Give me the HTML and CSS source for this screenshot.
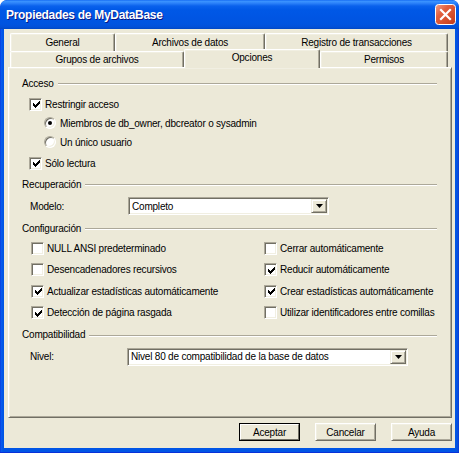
FILE: index.html
```html
<!DOCTYPE html>
<html lang="es">
<head>
<meta charset="utf-8">
<title>Propiedades de MyDataBase</title>
<link rel="stylesheet" href="styles.css">
</head>
<body>
<div class="window">
  <div class="titlebar">
    <span class="title">Propiedades de MyDataBase</span>
    <span class="close">
      <svg width="21" height="21" viewBox="0 0 21 21">
        <defs>
          <linearGradient id="cg" x1="0" y1="0" x2="1" y2="1">
            <stop offset="0" stop-color="#F2A08A"/>
            <stop offset="0.35" stop-color="#E2603F"/>
            <stop offset="1" stop-color="#C43A17"/>
          </linearGradient>
        </defs>
        <rect x="0.5" y="0.5" width="20" height="20" rx="3" fill="url(#cg)" stroke="#fff"/>
        <path d="M6 6 L15 15 M15 6 L6 15" stroke="#fff" stroke-width="2.2" stroke-linecap="square"/>
      </svg>
    </span>
  </div>
  <div class="client">
    <div class="tabrow">
      <div class="tab t-general">General</div>
      <div class="tab t-archivos">Archivos de datos</div>
      <div class="tab t-registro">Registro de transacciones</div>
    </div>
    <div class="tabrow front">
      <div class="tab t-grupos">Grupos de archivos</div>
      <div class="tab t-opciones active">Opciones</div>
      <div class="tab t-permisos">Permisos</div>
    </div>
    <div class="panel">
      <div class="group">Acceso</div>
      <div class="check lvl1 mt5"><span class="cb on"><svg width="7" height="7" viewBox="0 0 7 7"><path d="M0 2h1v3H0zM1 3h1v3H1zM2 4h1v3H2zM3 3h1v3H3zM4 2h1v3H4zM5 1h1v3H5zM6 0h1v3H6z" fill="#000"/></svg></span><span>Restringir acceso</span></div>
      <div class="radio lvl2 mt3"><span class="rb on"></span><span>Miembros de db_owner, dbcreator o sysadmin</span></div>
      <div class="radio lvl2 mt3"><span class="rb"></span><span>Un único usuario</span></div>
      <div class="check lvl1 mt5"><span class="cb on"><svg width="7" height="7" viewBox="0 0 7 7"><path d="M0 2h1v3H0zM1 3h1v3H1zM2 4h1v3H2zM3 3h1v3H3zM4 2h1v3H4zM5 1h1v3H5zM6 0h1v3H6z" fill="#000"/></svg></span><span>Sólo lectura</span></div>

      <div class="group mt5">Recuperación</div>
      <div class="field mt5">
        <span class="flabel">Modelo:</span>
        <div class="combo c-modelo"><span class="value">Completo</span><span class="drop"><svg width="7" height="4" viewBox="0 0 7 4"><path d="M0 0h7L3.5 4z" fill="#000"/></svg></span></div>
      </div>

      <div class="group mt5">Configuración</div>
      <div class="grid mt4">
        <div class="check gcol"><span class="cb"></span><span>NULL ANSI predeterminado</span></div>
        <div class="check gcol"><span class="cb"></span><span>Cerrar automáticamente</span></div>
        <div class="check gcol"><span class="cb"></span><span>Desencadenadores recursivos</span></div>
        <div class="check gcol"><span class="cb on"><svg width="7" height="7" viewBox="0 0 7 7"><path d="M0 2h1v3H0zM1 3h1v3H1zM2 4h1v3H2zM3 3h1v3H3zM4 2h1v3H4zM5 1h1v3H5zM6 0h1v3H6z" fill="#000"/></svg></span><span>Reducir automáticamente</span></div>
        <div class="check gcol"><span class="cb on"><svg width="7" height="7" viewBox="0 0 7 7"><path d="M0 2h1v3H0zM1 3h1v3H1zM2 4h1v3H2zM3 3h1v3H3zM4 2h1v3H4zM5 1h1v3H5zM6 0h1v3H6z" fill="#000"/></svg></span><span>Actualizar estadísticas automáticamente</span></div>
        <div class="check gcol"><span class="cb on"><svg width="7" height="7" viewBox="0 0 7 7"><path d="M0 2h1v3H0zM1 3h1v3H1zM2 4h1v3H2zM3 3h1v3H3zM4 2h1v3H4zM5 1h1v3H5zM6 0h1v3H6z" fill="#000"/></svg></span><span>Crear estadísticas automáticamente</span></div>
        <div class="check gcol"><span class="cb on"><svg width="7" height="7" viewBox="0 0 7 7"><path d="M0 2h1v3H0zM1 3h1v3H1zM2 4h1v3H2zM3 3h1v3H3zM4 2h1v3H4zM5 1h1v3H5zM6 0h1v3H6z" fill="#000"/></svg></span><span>Detección de página rasgada</span></div>
        <div class="check gcol"><span class="cb"></span><span>Utilizar identificadores entre comillas</span></div>
      </div>

      <div class="group mt6">Compatibilidad</div>
      <div class="field mt5">
        <span class="flabel f-nivel">Nivel:</span>
        <div class="combo c-nivel"><span class="value">Nivel 80 de compatibilidad de la base de datos</span><span class="drop"><svg width="7" height="4" viewBox="0 0 7 4"><path d="M0 0h7L3.5 4z" fill="#000"/></svg></span></div>
      </div>
    </div>
    <div class="buttons">
      <span class="btn default"><span class="btn-in">Aceptar</span></span>
      <span class="btn"><span class="btn-in">Cancelar</span></span>
      <span class="btn"><span class="btn-in">Ayuda</span></span>
    </div>
  </div>
</div>
</body>
</html>
```

FILE: styles.css
```css
* { box-sizing: border-box; }
html, body { margin: 0; padding: 0; background: #fff; }
body {
  width: 459px;
  height: 453px;
  overflow: hidden;
  font-family: "Liberation Sans", Arial, sans-serif;
  font-size: 10px;
  letter-spacing: -0.2px;
  color: #000;
}

.window {
  width: 459px;
  height: 453px;
  display: flex;
  flex-direction: column;
  border-radius: 7px 7px 0 0;
  overflow: hidden;
  background:
    linear-gradient(to right, #0831D9 0, #0A5BF0 1px, #0055E5 3px, #0055E5 calc(100% - 3px), #0A4DD8 calc(100% - 1px), #0831D9 100%);
  border-bottom: 1px solid #0831D9;
}

.titlebar {
  height: 29px;
  flex: none;
  display: flex;
  align-items: center;
  justify-content: space-between;
  padding: 0 3px 1px 6px;
  background: linear-gradient(to bottom,
    #0A5FEF 0, #3D95FF 1px, #2E84FA 3px, #0A61EC 6px, #0058E6 10px,
    #0055E3 18px, #0054E0 24px, #0250D8 27px, #0047C4 29px);
  border-radius: 7px 7px 0 0;
}

.title {
  color: #fff;
  font-weight: bold;
  font-size: 12px;
  letter-spacing: -0.3px;
  text-shadow: 1px 1px 0 #0A1883;
  padding-top: 1px;
}

.close {
  width: 21px;
  height: 21px;
  display: block;
}
.close svg { display: block; }

.client {
  flex: 1;
  margin: 0 4px 4px 4px;
  background: #ECE9D8;
  padding: 4px 3px 0 4px;
  display: flex;
  flex-direction: column;
}

/* tabs */
.tabrow {
  display: flex;
  margin-left: 2px;
  height: 18px;
}
.tabrow.front {
  height: 16px;
  align-items: flex-end;
}
.tab {
  height: 18px;
  background: #ECE9D8;
  border-top: 1px solid #fff;
  border-left: 1px solid #fff;
  border-right: 1px solid #716F64;
  box-shadow: inset -1px 0 0 #ACA899, inset 1px 1px 0 #F1EFE2;
  border-radius: 2px 2px 0 0;
  display: flex;
  align-items: center;
  justify-content: center;
  padding-bottom: 1px;
  white-space: nowrap;
}
.front .tab { height: 16px; }
.front .tab.active {
  height: 19px;
  margin-bottom: -1px;
  padding-bottom: 4px;
  position: relative;
  z-index: 1;
}
.t-general { width: 105px; }
.t-archivos { width: 150px; }
.t-registro { width: 183px; }
.t-grupos { width: 174px; }
.t-opciones { width: 136px; }
.t-permisos { width: 128px; }

/* panel */
.panel {
  height: 351px;
  flex: none;
  border: 1px solid;
  border-color: #fff #716F64 #716F64 #fff;
  box-shadow: inset 1px 1px 0 #F1EFE2, inset -1px -1px 0 #ACA899;
  padding: 7px 14px 0 13px;
}

.mt3 { margin-top: 3px; }
.mt4 { margin-top: 4px; }
.mt5 { margin-top: 5px; }
.mt6 { margin-top: 6px; }

.group {
  height: 16px;
  display: flex;
  align-items: center;
  white-space: nowrap;
}
.group::after {
  content: "";
  flex: 1;
  margin-left: 4px;
  margin-top: 2px;
  border-top: 1px solid #ACA899;
  border-bottom: 1px solid #fff;
}

.check, .radio {
  height: 16px;
  display: flex;
  align-items: center;
  white-space: nowrap;
}
.lvl1 { margin-left: 7px; }
.lvl2 { margin-left: 22px; }

.cb {
  width: 13px;
  height: 13px;
  flex: none;
  margin-right: 3px;
  background: #fff;
  border: 1px solid;
  border-color: #ACA899 #fff #fff #ACA899;
  box-shadow: inset 1px 1px 0 #716F64, inset -1px -1px 0 #F1EFE2;
  display: flex;
  align-items: center;
  justify-content: center;
}
.cb svg { display: block; margin: 1px 0 0 1px; }

.rb {
  width: 12px;
  height: 12px;
  flex: none;
  margin-right: 4px;
  border-radius: 50%;
  background: #fff;
  border: 1px solid;
  border-color: #ACA899 #fff #fff #ACA899;
  box-shadow: inset 1px 1px 0 #716F64, inset -1px -1px 0 #F1EFE2;
  display: flex;
  align-items: center;
  justify-content: center;
}
.rb.on::after {
  content: "";
  width: 4px;
  height: 4px;
  border-radius: 50%;
  background: #000;
}

.field {
  height: 18px;
  display: flex;
  align-items: center;
}
.flabel {
  width: 98px;
  margin-left: 8px;
  flex: none;
}
.flabel.f-nivel { width: 97px; }

.combo {
  height: 18px;
  display: flex;
  align-items: center;
  background: #fff;
  border: 1px solid;
  border-color: #ACA899 #fff #fff #ACA899;
  box-shadow: inset 1px 1px 0 #716F64, inset -1px -1px 0 #F1EFE2;
  padding: 1px 1px 1px 3px;
}
.c-modelo { width: 201px; }
.c-nivel { width: 281px; }
.combo .value { flex: 1; white-space: nowrap; }
.combo .drop {
  width: 16px;
  height: 14px;
  flex: none;
  background: #ECE9D8;
  border: 1px solid;
  border-color: #F1EFE2 #716F64 #716F64 #F1EFE2;
  box-shadow: inset 1px 1px 0 #fff, inset -1px -1px 0 #ACA899;
  display: flex;
  align-items: center;
  justify-content: center;
}
.combo .drop svg { display: block; }

.grid {
  display: grid;
  grid-template-columns: 233px 1fr;
  grid-auto-rows: 16px;
  row-gap: 5.6px;
}
.gcol { margin-left: 9px; }

/* buttons */
.buttons {
  display: flex;
  justify-content: flex-end;
  gap: 15px;
  margin-top: 5px;
}
.btn {
  width: 61px;
  height: 18px;
  display: flex;
  background: #ECE9D8;
  border: 1px solid;
  border-color: #fff #716F64 #716F64 #fff;
  box-shadow: inset 1px 1px 0 #F1EFE2, inset -1px -1px 0 #ACA899;
}
.btn.default {
  border-color: #000;
  box-shadow: none;
}
.btn-in {
  flex: 1;
  display: flex;
  align-items: center;
  justify-content: center;
}
.btn.default .btn-in {
  border: 1px solid;
  border-color: #fff #716F64 #716F64 #fff;
}
```
